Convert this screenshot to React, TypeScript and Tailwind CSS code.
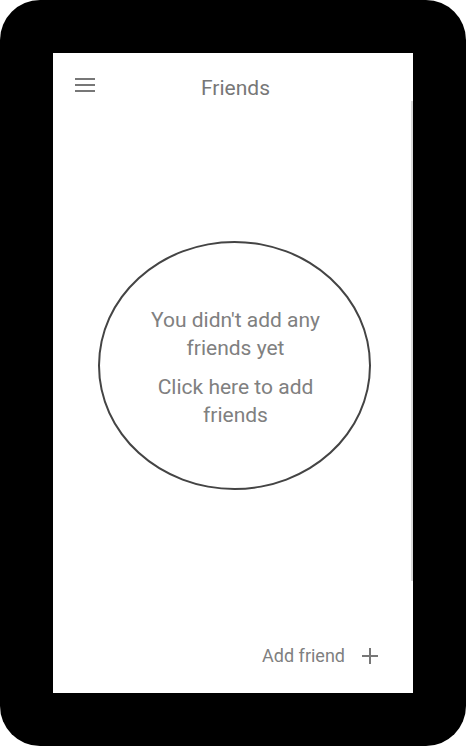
export default function App() {
  return (
    <div className="w-[466px] h-[746px] bg-white" style={{ fontFamily: 'Roboto, "Noto Sans", sans-serif' }}>
      <div className="w-full h-full bg-black rounded-[40px] p-[53px]">
        <div className="relative w-full h-full bg-white flex flex-col">
          {/* scrollbar */}
          <div className="absolute right-0 top-[48px] h-[480px] w-[2px] bg-[#d9d9d9]" />

          <header className="relative h-[72px] flex justify-center pt-[21px] pl-[5px]">
            <button className="absolute left-[22px] top-[25px] flex flex-col gap-[4px]">
              <span className="block w-[20px] h-[2px] bg-[#777]" />
              <span className="block w-[20px] h-[2px] bg-[#777]" />
              <span className="block w-[20px] h-[2px] bg-[#777]" />
            </button>
            <h1 className="text-[21px] leading-[28px] text-[#777]">Friends</h1>
          </header>

          <div className="mt-[116px] ml-[45px] w-[273px] h-[249px] rounded-[50%] border-2 border-[#444] flex flex-col items-center justify-center pt-[4px] pl-[2px] text-center text-[21px] leading-[28px] text-[#808080]">
            <p>You didn't add any<br />friends yet</p>
            <p className="mt-[11px]">Click here to add<br />friends</p>
          </div>

          <footer className="mt-auto flex justify-end items-center gap-[16px] pr-[34px] pb-[25px]">
            <span className="text-[18px] leading-[24px] text-[#808080]">Add friend</span>
            <svg width="18" height="18" viewBox="0 0 18 18" className="text-[#777]">
              <path d="M9 1v16M1 9h16" stroke="currentColor" strokeWidth="2" />
            </svg>
          </footer>
        </div>
      </div>
    </div>
  );
}
